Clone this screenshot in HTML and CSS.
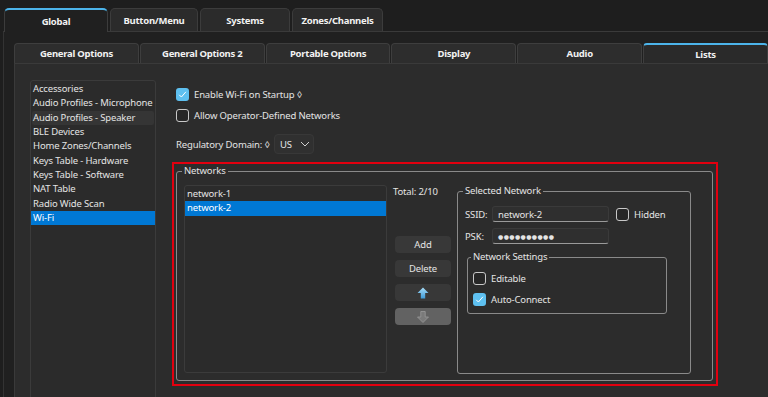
FILE: index.html
```html
<!DOCTYPE html>
<html lang="en">
<head>
    <meta charset="UTF-8">
    <meta name="viewport" content="width=device-width, initial-scale=1.0">
    <title>Configuration - Lists</title>
    <link rel="stylesheet" href="styles.css">
</head>
<body>
    <div class="tabs">
        <div class="tab tab-active">Global</div>
        <div class="tab tab-button">Button/Menu</div>
        <div class="tab tab-systems">Systems</div>
        <div class="tab tab-zones">Zones/Channels</div>
    </div>
    <div class="tab-panel">
        <div class="subtabs">
            <div class="subtab">General Options</div>
            <div class="subtab">General Options 2</div>
            <div class="subtab">Portable Options</div>
            <div class="subtab">Display</div>
            <div class="subtab">Audio</div>
            <div class="subtab subtab-active">Lists</div>
        </div>
        <div class="page">
            <ul class="list sidebar">
                <li>Accessories</li>
                <li>Audio Profiles - Microphone</li>
                <li class="hover">Audio Profiles - Speaker</li>
                <li>BLE Devices</li>
                <li>Home Zones/Channels</li>
                <li>Keys Table - Hardware</li>
                <li>Keys Table - Software</li>
                <li>NAT Table</li>
                <li>Radio Wide Scan</li>
                <li class="selected">Wi-Fi</li>
            </ul>

            <div class="wifi">
                <div class="check-row">
                    <span class="check checked">
                        <svg viewBox="0 0 13 13" width="13" height="13"><path d="M3.2 6.8 L5.4 9 L9.9 3.8" fill="none" stroke="#fff" stroke-width="1"/></svg>
                    </span>
                    Enable Wi-Fi on Startup ◊
                </div>
                <div class="check-row">
                    <span class="check"></span>
                    Allow Operator-Defined Networks
                </div>
                <div class="domain-row">
                    <span>Regulatory Domain: ◊</span>
                    <div class="combo">
                        <span>US</span>
                        <svg viewBox="0 0 10 6" width="10" height="6"><path d="M1 1 L5 5 L9 1" fill="none" stroke="#d0d0d0" stroke-width="1"/></svg>
                    </div>
                </div>

                <div class="highlight">
                    <fieldset class="group networks">
                        <legend>Networks</legend>
                        <div class="networks-body">
                            <ul class="list net-list">
                                <li>network-1</li>
                                <li class="selected">network-2</li>
                            </ul>
                            <div class="net-actions">
                                <div class="total">Total: 2/10</div>
                                <div class="buttons">
                                    <button class="btn">Add</button>
                                    <button class="btn">Delete</button>
                                    <button class="btn">
                                        <svg viewBox="0 0 12 12" width="12" height="12">
                                            <defs>
                                                <linearGradient id="up" x1="0" y1="0" x2="0" y2="1">
                                                    <stop offset="0" stop-color="#a8dcf7"/>
                                                    <stop offset="1" stop-color="#3d9bd8"/>
                                                </linearGradient>
                                            </defs>
                                            <path d="M6 0.5 L11.5 6 L8.2 6 L8.2 11.5 L3.8 11.5 L3.8 6 L0.5 6 Z" fill="url(#up)"/>
                                        </svg>
                                    </button>
                                    <button class="btn btn-disabled">
                                        <svg viewBox="0 0 12 12" width="12" height="12">
                                            <path d="M3.8 0.5 L8.2 0.5 L8.2 6 L11.5 6 L6 11.5 L0.5 6 L3.8 6 Z" fill="#7a7a7a" stroke="#9a9a9a" stroke-width="0.8"/>
                                        </svg>
                                    </button>
                                </div>
                            </div>
                            <fieldset class="group selected-net">
                                <legend>Selected Network</legend>
                                <div class="form-row">
                                    <span class="label">SSID:</span>
                                    <div class="input">network-2</div>
                                    <span class="check"></span>
                                    <span class="hidden-label">Hidden</span>
                                </div>
                                <div class="form-row">
                                    <span class="label">PSK:</span>
                                    <div class="input dots">●●●●●●●●●●</div>
                                </div>
                                <fieldset class="group settings">
                                    <legend>Network Settings</legend>
                                    <div class="check-row">
                                        <span class="check"></span>
                                        Editable
                                    </div>
                                    <div class="check-row">
                                        <span class="check checked">
                                            <svg viewBox="0 0 13 13" width="13" height="13"><path d="M3.2 6.8 L5.4 9 L9.9 3.8" fill="none" stroke="#fff" stroke-width="1"/></svg>
                                        </span>
                                        Auto-Connect
                                    </div>
                                </fieldset>
                            </fieldset>
                        </div>
                    </fieldset>
                </div>
            </div>
        </div>
    </div>
</body>
</html>
```

FILE: styles.css
```css
* {
    margin: 0;
    padding: 0;
    box-sizing: border-box;
}

body {
    font-family: 'Noto Sans', 'Open Sans', sans-serif;
    font-size: 9.5px;
    letter-spacing: -0.15px;
    color: #e4e4e4;
    background: #1e1e1e;
    height: 397px;
    overflow: hidden;
}

/* Top level tabs */
.tabs {
    display: flex;
    gap: 2px;
    padding: 8px 0 0 4px;
}

.tab {
    height: 23px;
    width: 88px;
    display: flex;
    justify-content: center;
    align-items: center;
    font-weight: 700;
    letter-spacing: -0.25px;
    color: #f2f2f2;
    background: #2b2b2b;
    border: 1px solid #3c3c3c;
    border-bottom: none;
    border-radius: 5px 5px 0 0;
}

.tab-active {
    width: 104px;
    height: 24px;
    margin-bottom: -1px;
    position: relative;
    background: #202020;
    border-top: 2px solid #4cb4ea;
}

.tab-systems { width: 90px; }
.tab-zones { width: 91px; }

.tab-panel {
    margin-left: 3px;
    border-top: 1px solid #3a3a3a;
    border-left: 1px solid #333;
    background: #202020;
    padding: 11px 0 0 10px;
}

/* Second level tabs */
.subtabs {
    display: flex;
    gap: 1px;
}

.subtab {
    width: 125px;
    height: 20px;
    display: flex;
    justify-content: center;
    align-items: center;
    font-weight: 700;
    letter-spacing: -0.25px;
    color: #f2f2f2;
    background: #2d2d2d;
    border: 1px solid #3e3e3e;
    border-bottom: none;
    border-radius: 4px 4px 0 0;
}

.subtab-active {
    background: #2a2a2a;
    border-top: 2px solid #4cb4ea;
}

.page {
    display: flex;
    gap: 16px;
    height: 340px;
    background: #2c2c2c;
    border: 1px solid #3a3a3a;
    border-right: none;
    padding: 16px 0 0 15px;
}

/* Lists */
.list {
    list-style: none;
    background: #2b2b2b;
    border: 1px solid #3b3b3b;
    border-radius: 3px;
}

.list li {
    height: 14.33px;
    line-height: 14.33px;
    padding-left: 2px;
    white-space: nowrap;
}

.list li.selected {
    background: #0078d4;
    color: #fff;
}

.sidebar {
    width: 126px;
    height: 330px;
    padding-top: 1px;
}

.sidebar li.hover {
    background: #353535;
    border-radius: 2px;
    margin: 0 1px;
    padding-left: 1px;
}

/* Wi-Fi settings */
.wifi {
    display: flex;
    flex-direction: column;
    padding-top: 4px;
}

.check-row {
    display: flex;
    align-items: center;
    gap: 5px;
    height: 21px;
    padding-left: 4px;
}

.check {
    width: 13px;
    height: 13px;
    flex-shrink: 0;
    border: 1px solid #c8c8c8;
    border-radius: 3px;
    background: #272727;
    display: flex;
}

.check.checked {
    border: none;
    background: #5ec0f0;
}

.domain-row {
    display: flex;
    align-items: center;
    gap: 4px;
    height: 20px;
    margin-top: 8px;
    padding-left: 4px;
}

.combo {
    width: 40px;
    height: 20px;
    display: flex;
    align-items: center;
    justify-content: space-between;
    padding: 0 3px 0 5px;
    background: #303030;
    border: 1px solid #383838;
    border-radius: 4px;
}

.highlight {
    width: 546px;
    height: 224px;
    margin-top: 8px;
    border: 2px solid #e2000f;
    padding: 0 3px 3px 2px;
    display: flex;
}

/* Group boxes */
.group {
    border: 1px solid #8a8a8a;
    border-radius: 3px;
}

.group legend {
    height: 14px;
    line-height: 14px;
    padding: 0 2px;
    margin-left: -2px;
    color: #e4e4e4;
}

.networks {
    flex: 1;
    padding: 7px;
}

.networks-body {
    display: flex;
    gap: 6px;
    align-items: flex-start;
}

.net-list {
    width: 203px;
    height: 188px;
    padding-top: 1px;
}

.net-list li {
    padding-left: 2px;
}

.net-actions {
    width: 58px;
    display: flex;
    flex-direction: column;
}

.total {
    height: 14px;
    line-height: 14px;
}

.buttons {
    display: flex;
    flex-direction: column;
    gap: 7px;
    margin: 37px 0 0 2px;
}

.btn {
    width: 56px;
    height: 17px;
    border: none;
    border-radius: 4px;
    background: #383838;
    color: #e4e4e4;
    font-family: inherit;
    font-size: inherit;
    letter-spacing: inherit;
    display: flex;
    align-items: center;
    justify-content: center;
}

.btn-disabled {
    background: #626262;
}

.selected-net {
    width: 234px;
    height: 190px;
    margin-top: -1px;
    padding: 8px 7px 0;
}

.form-row {
    display: flex;
    align-items: center;
    height: 16px;
    margin-bottom: 6px;
}

.label {
    width: 27px;
}

.input {
    width: 117px;
    height: 16px;
    line-height: 15px;
    padding-left: 5px;
    background: #2f2f2f;
    border: 1px solid #3a3a3a;
    border-bottom-color: #9a9a9a;
    border-radius: 3px;
    margin-right: 7px;
}

.input.dots {
    font-family: 'DejaVu Sans', sans-serif;
    font-size: 6px;
    letter-spacing: 0.4px;
}

.hidden-label {
    margin-left: 5px;
}

.settings {
    width: 200px;
    margin: 5px 0 0 2px;
    padding: 4px 5px 3px;
}

.settings .check-row {
    padding-left: 0;
}
```
